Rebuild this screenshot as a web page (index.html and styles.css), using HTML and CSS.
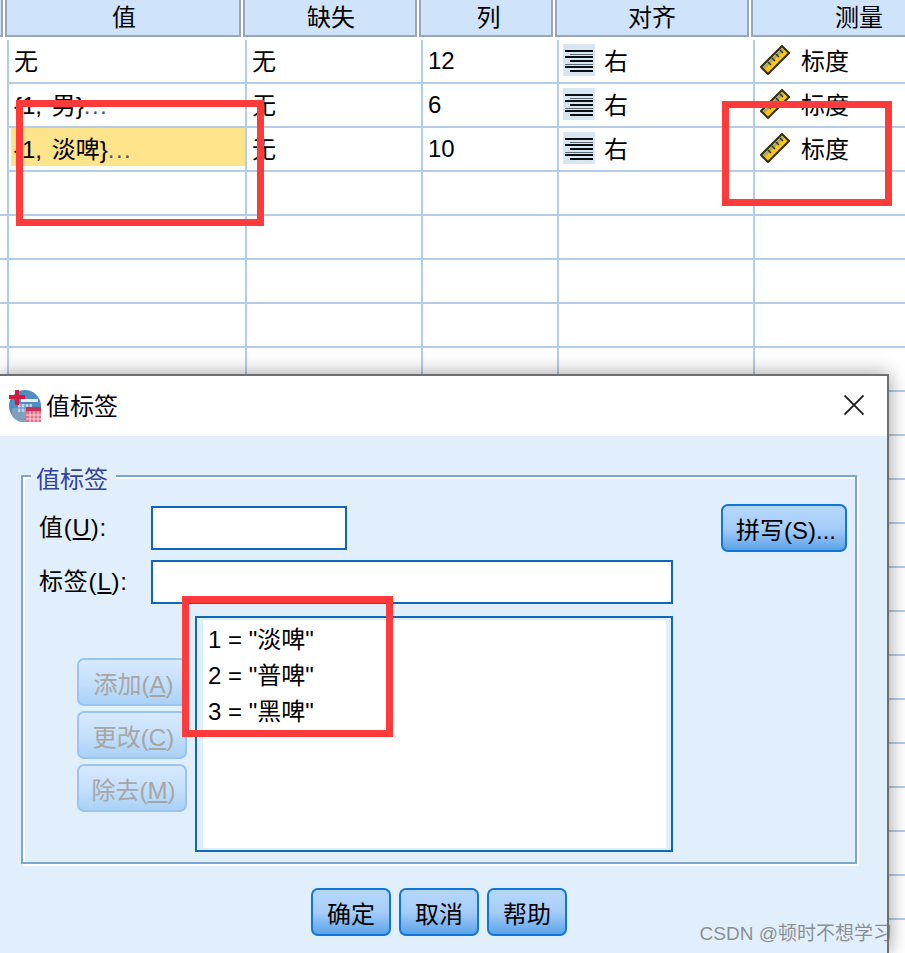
FILE: index.html
```html
<!DOCTYPE html>
<html>
<head>
    <meta charset="utf-8">
    <title>值标签</title>
    <link rel="stylesheet" href="styles.css">
</head>
<body>

    <svg class="defs" width="0" height="0">
        <symbol id="alignRight" viewBox="0 0 32 32">
            <rect width="32" height="32" fill="#d8e6f1"/>
            <rect x="2" y="6" width="28" height="2" fill="#0c0f14"/>
            <rect x="7" y="10" width="23" height="1" fill="#5d6a75"/>
            <rect x="2" y="12" width="28" height="2" fill="#0c0f14"/>
            <rect x="7" y="16" width="23" height="2" fill="#0c0f14"/>
            <rect x="2" y="20" width="28" height="1" fill="#5d6a75"/>
            <rect x="2" y="22" width="28" height="2" fill="#0c0f14"/>
            <rect x="7" y="26" width="23" height="2" fill="#0c0f14"/>
        </symbol>
        <symbol id="ruler" viewBox="0 0 30 30">
            <path d="M1 22 L22 1 L29 8 L8 29 Z" fill="#ffc808" stroke="#2f2c18" stroke-width="2"/>
            <path d="M3 22 L22 3 L24 5 L5 24 Z" fill="#a9a56c"/>
            <path d="M8 17 L11 20 M12 13 L15 16 M16 9 L19 12 M20 5 L23 8" stroke="#3b3820" stroke-width="1.5"/>
        </symbol>
    </svg>

    <div class="sheet">
        <div class="sheet-head">
            <div class="head-stub"></div>
            <div class="head-cell">值</div>
            <div class="head-cell">缺失</div>
            <div class="head-cell">列</div>
            <div class="head-cell">对齐</div>
            <div class="head-cell">测量</div>
        </div>

        <div class="sheet-row">
            <div class="cell"><span>无</span></div>
            <div class="cell"><span>无</span></div>
            <div class="cell cell-num"><span>12</span></div>
            <div class="cell"><svg class="align-icon"><use href="#alignRight"/></svg><span class="cell-label">右</span></div>
            <div class="cell"><svg class="ruler-icon"><use href="#ruler"/></svg><span class="cell-label">标度</span></div>
        </div>
        <div class="sheet-row">
            <div class="cell"><span class="cell-values">{1, 男}<i class="more">...</i></span></div>
            <div class="cell"><span>无</span></div>
            <div class="cell cell-num"><span>6</span></div>
            <div class="cell"><svg class="align-icon"><use href="#alignRight"/></svg><span class="cell-label">右</span></div>
            <div class="cell"><svg class="ruler-icon"><use href="#ruler"/></svg><span class="cell-label">标度</span></div>
        </div>
        <div class="sheet-row">
            <div class="cell cell-selected"><span class="cell-values">{1, 淡啤}<i class="more">...</i></span></div>
            <div class="cell"><span>无</span></div>
            <div class="cell cell-num"><span>10</span></div>
            <div class="cell"><svg class="align-icon"><use href="#alignRight"/></svg><span class="cell-label">右</span></div>
            <div class="cell"><svg class="ruler-icon"><use href="#ruler"/></svg><span class="cell-label">标度</span></div>
        </div>
        <!-- empty rows, only the grid lines -->
        <div class="sheet-empty"></div>
    </div>

    <div class="dialog">
        <div class="dialog-title">
            <svg class="dialog-icon" viewBox="0 0 32 32">
                <circle cx="16" cy="16" r="16" fill="#4f8dc4"/>
                <path d="M3 26 A16 16 0 0 0 27 28 L27 18 L3 18 Z" fill="#7f9fbd"/>
                <rect x="12" y="9" width="17" height="3" fill="#e6eef6"/>
                <rect x="9" y="14" width="14" height="8" fill="#b9d3ea"/>
                <path d="M12 14v8M16 14v8M20 14v8M9 18h14" stroke="#5c8fc0" stroke-width="1"/>
                <rect x="0" y="5" width="16" height="4" fill="#d5183c"/>
                <rect x="6" y="0" width="4" height="15" fill="#d5183c"/>
                <rect x="17" y="17" width="15" height="15" fill="#e3708a"/>
                <rect x="17" y="17" width="15" height="4" fill="#c9304f"/>
                <path d="M21 21v11M25 21v11M29 21v11M17 25h15M17 29h15" stroke="#f8d5dd" stroke-width="1"/>
            </svg>
            <span class="dialog-name">值标签</span>
            <svg class="dialog-close" viewBox="0 0 20 20">
                <path d="M0.5 0.5 L19.5 19.5 M19.5 0.5 L0.5 19.5" stroke="#1c1c1c" stroke-width="1.8"/>
            </svg>
        </div>

        <div class="dialog-body">
            <div class="group">
                <span class="group-name">值标签</span>

                <div class="form-row">
                    <label class="form-label">值(<u>U</u>):</label>
                    <div class="field field-short"></div>
                    <button class="btn btn-spell">拼写(S)...</button>
                </div>
                <div class="form-row form-row-label">
                    <label class="form-label">标签(<u>L</u>):</label>
                    <div class="field field-long"></div>
                </div>

                <div class="list-row">
                    <div class="side-buttons">
                        <button class="btn btn-off">添加(<u>A</u>)</button>
                        <button class="btn btn-off">更改(<u>C</u>)</button>
                        <button class="btn btn-off">除去(<u>M</u>)</button>
                    </div>
                    <div class="value-list">
                        <div class="value-items">
                            <div class="value-item">1 = "淡啤"</div>
                            <div class="value-item">2 = "普啤"</div>
                            <div class="value-item">3 = "黑啤"</div>
                        </div>
                    </div>
                </div>
            </div>

            <div class="dialog-actions">
                <button class="btn btn-action">确定</button>
                <button class="btn btn-action">取消</button>
                <button class="btn btn-action">帮助</button>
            </div>
        </div>
    </div>

    <div class="mark mark-values"></div>
    <div class="mark mark-measure"></div>
    <div class="mark mark-list"></div>

    <div class="watermark">CSDN @顿时不想学习</div>

</body>
</html>
```

FILE: styles.css
```css
body, html {
    margin: 0;
    height: 100%;
}

body {
    position: relative;
    width: 905px;
    height: 953px;
    overflow: hidden;
    background: #fff;
    color: #000;
    font-family: "Liberation Sans", "Noto Sans CJK SC", sans-serif;
    font-size: 24px;
}

.defs {
    position: absolute;
}

/* data sheet */

.sheet {
    display: flex;
    flex-direction: column;
    width: 905px;
    height: 953px;
}

.sheet-head {
    display: flex;
    height: 37px;
    margin-bottom: 3px;
}

.head-stub {
    width: 1px;
    margin-right: 2px;
    background: #cfe3fb;
    border-right: 2px solid #98a6ba;
    border-bottom: 2px solid #98a6ba;
}

.head-cell {
    box-sizing: border-box;
    margin-right: 2px;
    padding-left: 2px;
    background: #cfe3fb;
    border: 2px solid #98a6ba;
    border-top: none;
    text-align: center;
    line-height: 36px;
}

.head-cell:nth-child(2) { width: 236px; }
.head-cell:nth-child(3) { width: 174px; }
.head-cell:nth-child(4) { width: 134px; padding-left: 5px; }
.head-cell:nth-child(5) { width: 194px; padding-left: 0; }
.head-cell:nth-child(6) { width: 154px; margin-right: 0; padding-left: 60px; border-right: none; }

.sheet-row {
    display: flex;
    height: 44px;
    padding-left: 7px;
}

.cell {
    box-sizing: border-box;
    display: flex;
    align-items: center;
    padding-bottom: 4px;
    border-left: 2px solid #b3cde8;
    border-bottom: 2px solid #b3cde8;
    white-space: nowrap;
}

.cell:nth-child(1) { width: 238px; }
.cell:nth-child(2) { width: 176px; }
.cell:nth-child(3) { width: 136px; }
.cell:nth-child(4) { width: 196px; }
.cell:nth-child(5) { width: 152px; }

.cell-num {
    padding-bottom: 0;
}

.cell > span {
    margin-left: 5px;
}

.cell-values {
    word-spacing: 3px;
}

.cell-selected {
    padding-left: 2px;
    background-color: #fde38a;
    background-clip: content-box;
}

.cell-selected > span {
    margin-left: 3px;
}

.more {
    font-style: normal;
    letter-spacing: 1.5px;
    color: #3d5a78;
}

.align-icon {
    width: 32px;
    height: 32px;
    margin-top: 2px;
    margin-left: 4px;
}

.ruler-icon {
    width: 30px;
    height: 30px;
    margin-top: 2px;
    margin-left: 5px;
}

.cell > .cell-label {
    margin-left: 9px;
}

.cell > .ruler-icon + .cell-label {
    margin-left: 11px;
}

.sheet-empty {
    flex: 1;
    background-image:
        linear-gradient(#b3cde8, #b3cde8),
        linear-gradient(#b3cde8, #b3cde8),
        linear-gradient(#b3cde8, #b3cde8),
        linear-gradient(#b3cde8, #b3cde8),
        linear-gradient(#b3cde8, #b3cde8),
        repeating-linear-gradient(#fff 0, #fff 42px, #b3cde8 42px, #b3cde8 44px);
    background-size: 2px 100%, 2px 100%, 2px 100%, 2px 100%, 2px 100%, 100% 100%;
    background-position: 7px 0, 245px 0, 421px 0, 557px 0, 753px 0, 0 0;
    background-repeat: no-repeat;
}

/* dialog, runs off the left and bottom of the shot */

.dialog {
    position: absolute;
    top: 374px;
    left: 0;
    box-sizing: border-box;
    width: 889px;
    height: 579px;
    background: #e1eefb;
    border-top: 2px solid #6e6e6e;
    border-right: 2px solid #6e6e6e;
    box-shadow: 0 0 18px rgba(0, 0, 0, 0.4);
}

.dialog-title {
    display: flex;
    align-items: center;
    height: 60px;
    padding-left: 9px;
    background: #fff;
}

.dialog-icon {
    width: 32px;
    height: 32px;
}

.dialog-name {
    margin-left: 5px;
    margin-bottom: 4px;
}

.dialog-close {
    width: 20px;
    height: 20px;
    margin-left: auto;
    margin-right: 23px;
    margin-bottom: 2px;
}

.dialog-body {
    padding: 39px 0 0 21px;
}

.group {
    position: relative;
    box-sizing: border-box;
    width: 836px;
    height: 389px;
    padding: 27px 8px 0 16px;
    border: 2px solid #7aa6d2;
    box-shadow: 2px 2px 0 #fff, inset 2px 2px 0 #fff;
}

.group-name {
    position: absolute;
    top: -10px;
    left: 8px;
    padding: 0 8px 0 5px;
    background: #e1eefb;
    color: #33429a;
    line-height: 26px;
}

.form-row {
    display: flex;
    align-items: center;
}

.form-row-label {
    margin-top: 8px;
}

.form-label {
    box-sizing: border-box;
    width: 112px;
    padding-bottom: 6px;
    letter-spacing: 0.8px;
    white-space: nowrap;
}

.field {
    box-sizing: border-box;
    height: 44px;
    background: #fff;
    border: 2px solid #0f67b8;
}

.field-short { width: 196px; }
.field-long { width: 522px; }

.btn {
    box-sizing: border-box;
    height: 48px;
    padding: 0;
    background: linear-gradient(#b6d7fc, #a6cdf8 50%, #5da4e9);
    border: 2px solid #0f77d6;
    border-radius: 7px;
    color: #000;
    font-family: inherit;
    font-size: 24px;
    white-space: nowrap;
}

.btn-spell {
    width: 126px;
    margin-left: auto;
    padding-left: 4px;
}

.btn-off {
    width: 110px;
    padding-left: 3px;
    background: linear-gradient(#d8e9fd, #c5e0fb 50%, #a9d1f6);
    border-color: #98c6f0;
    color: #a6a6a6;
}

.btn-action {
    width: 80px;
}

.list-row {
    display: flex;
    margin-top: 12px;
}

.side-buttons {
    display: flex;
    flex-direction: column;
    gap: 5px;
    width: 110px;
    margin-left: 38px;
    margin-right: 8px;
    padding-top: 42px;
}

.value-list {
    box-sizing: border-box;
    width: 478px;
    height: 236px;
    padding: 2px 5px 2px 6px;
    background: #e1eefb;
    border: 2px solid #0f67b8;
}

.value-items {
    box-sizing: border-box;
    height: 100%;
    padding: 2px 5px;
    background: #fff;
}

.value-item {
    line-height: 36px;
}

.dialog-actions {
    display: flex;
    justify-content: center;
    gap: 8px;
    margin-top: 24px;
    padding-right: 30px;
}

/* red annotation boxes */

.mark {
    position: absolute;
    box-sizing: border-box;
    border: 7px solid #ff3a3a;
}

.mark-values {
    top: 100px;
    left: 16px;
    width: 248px;
    height: 126px;
}

.mark-measure {
    top: 101px;
    left: 722px;
    width: 170px;
    height: 105px;
}

.mark-list {
    top: 596px;
    left: 182px;
    width: 211px;
    height: 141px;
}

.watermark {
    position: absolute;
    top: 921px;
    right: 13px;
    color: rgba(110, 110, 110, 0.75);
    font-size: 19px;
    line-height: 26px;
    white-space: nowrap;
}
```
